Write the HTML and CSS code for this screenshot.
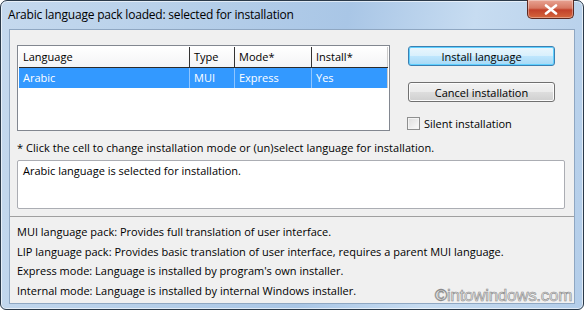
FILE: index.html
```html
<!DOCTYPE html>
<html>
<head>
<meta charset="utf-8">
<link rel="stylesheet" href="styles.css">
</head>
<body>
<div class="window">
  <div class="titlebar">
    <span class="title">Arabic language pack loaded: selected for installation</span>
    <div class="close"><svg width="14" height="11" viewBox="0 0 14 11"><path d="M2 1.5 L12 9.5 M12 1.5 L2 9.5" stroke="#fff" stroke-width="2.6" stroke-linecap="round"/></svg></div>
  </div>
  <div class="client">
    <div class="top">
      <div class="list">
        <div class="row head">
          <div class="c c1">Language</div>
          <div class="c c2">Type</div>
          <div class="c c3">Mode*</div>
          <div class="c c4">Install*</div>
        </div>
        <div class="row sel">
          <div class="c c1">Arabic</div>
          <div class="c c2">MUI</div>
          <div class="c c3">Express</div>
          <div class="c c4">Yes</div>
        </div>
      </div>
      <div class="side">
        <div class="btn default">Install language</div>
        <div class="btn">Cancel installation</div>
        <label class="check"><span class="box"></span>Silent installation</label>
      </div>
    </div>
    <div class="hint">* Click the cell to change installation mode or (un)select language for installation.</div>
    <div class="status">Arabic language is selected for installation.</div>
    <div class="info">
      <div>MUI language pack: Provides full translation of user interface.</div>
      <div>LIP language pack: Provides basic translation of user interface, requires a parent MUI language.</div>
      <div>Express mode: Language is installed by program's own installer.</div>
      <div>Internal mode: Language is installed by internal Windows installer.</div>
    </div>
    <div class="watermark">©intowindows.com</div>
  </div>
</div>
</body>
</html>
```
FILE: styles.css
```css
* { box-sizing: border-box; }
body {
  margin: 0;
  background: #fff;
  font-family: "Open Sans", "Noto Sans", sans-serif;
  font-size: 11px;
  color: #000;
}
.window {
  width: 584px;
  height: 310px;
  border: 1px solid #2b3a4a;
  border-radius: 7px 7px 6px 6px;
  background: linear-gradient(100deg, #c5d9ee 0%, #b6cfe9 30%, #a9c6e6 55%, #c7dcf1 75%, #b3cde9 100%);
  box-shadow: inset 0 0 0 1px rgba(255,255,255,0.6);
  display: flex;
  flex-direction: column;
  position: relative;
}
.titlebar {
  height: 28px;
  display: flex;
  align-items: flex-start;
  justify-content: space-between;
  padding-left: 7px;
}
.title {
  font-size: 12px;
  margin-top: 5px;
  color: #000;
  letter-spacing: -0.2px;
}
.close {
  width: 47px;
  height: 19px;
  margin-right: 9px;
  margin-top: -1px;
  border: 1px solid #5b2a22;
  border-top: none;
  border-radius: 0 0 5px 5px;
  background: linear-gradient(#e8a393 0%, #d77862 45%, #c2412a 55%, #d4663c 100%);
  display: flex;
  align-items: center;
  justify-content: center;
  box-shadow: inset 0 0 0 1px rgba(255,255,255,0.35);
}
.client {
  margin: 0 8px;
  height: 275px;
  background: #f0f0f0;
  border: 1px solid #8fa7c2;
  padding: 15px 0 0 7px;
  position: relative;
}
.top {
  display: flex;
  height: 86px;
}
.list {
  width: 373px;
  height: 86px;
  background: #fff;
  border: 1px solid #828790;
  padding: 1px;
}
.row {
  display: flex;
  height: 21px;
}
.row.head {
  background: linear-gradient(#fff, #f3f4f6);
  border-bottom: 1px solid #2a2a2a;
  height: 21px;
}
.row.sel {
  background: #3399ff;
  color: #fff;
  height: 20px;
}
.c {
  padding: 2px 0 0 4px;
  white-space: nowrap;
}
.head .c { border-right: 1px solid #333; }
.sel .c { border-right: 1px solid #8fc5ff; }
.c1 { width: 171px; }
.c2 { width: 45px; }
.c3 { width: 77px; }
.c4 { width: 76px; }
.head .c4, .sel .c4 { border-right: 1px solid #ccc; }
.side {
  margin-left: 18px;
  display: flex;
  flex-direction: column;
  align-items: flex-start;
}
.btn {
  width: 147px;
  height: 22px;
  border: 1px solid #707070;
  border-radius: 3px;
  background: linear-gradient(#f2f2f2 0%, #ebebeb 48%, #dddddd 52%, #cfcfcf 100%);
  box-shadow: inset 0 0 0 1px #fcfcfc;
  display: flex;
  align-items: center;
  justify-content: center;
  margin-top: 1px;
}
.btn.default {
  border-color: #3c7fb1;
  background: linear-gradient(#eaf6fd 0%, #d9f0fc 48%, #bee6fd 52%, #a7d9f5 100%);
  box-shadow: inset 0 0 0 1px #5fd0ff;
}
.btn + .btn { margin-top: 16px; }
.check {
  display: flex;
  align-items: center;
  margin-top: 14px;
  margin-left: -1px;
}
.box {
  width: 13px;
  height: 13px;
  border: 1px solid #8e8f8f;
  background: linear-gradient(135deg, #dcdcdc, #fbfbfb);
  box-shadow: inset 0 0 0 1px #f4f4f4;
  margin-right: 4px;
}
.hint {
  margin-top: 9px;
  height: 15px;
  letter-spacing: 0.05px;
}
.status {
  margin-top: 5px;
  width: 548px;
  height: 49px;
  background: #fff;
  border: 1px solid #abadb3;
  border-radius: 2px;
  padding: 2px 0 0 5px;
}
.info {
  margin: 7px 0 0 -7px;
  border-top: 1px solid #a0a0a0;
  padding: 6px 0 0 7px;
}
.info div {
  height: 19.5px;
  line-height: 18px;
}
.watermark {
  position: absolute;
  right: 2px;
  bottom: -3px;
  font-family: "Liberation Sans", sans-serif;
  font-size: 17px;
  color: #e8e8e8;
  -webkit-text-stroke: 0.6px #8a8a8a;
  letter-spacing: -0.3px;
}
```
